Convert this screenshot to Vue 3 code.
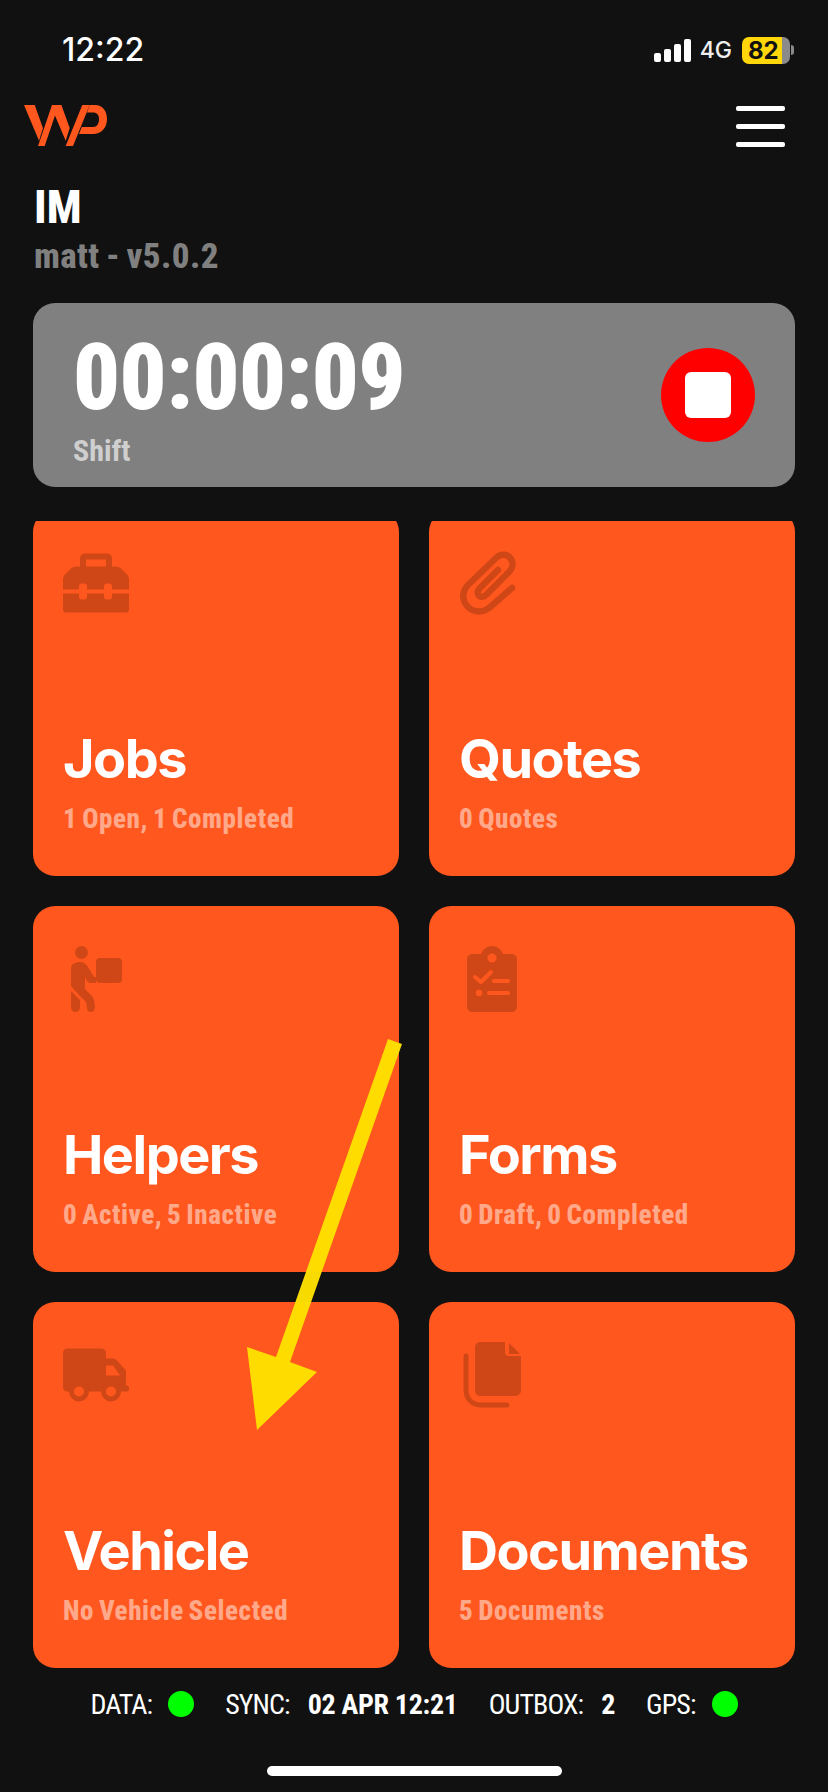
<template>
  <div class="screen">
    <div class="statusbar">
      <span class="clock">12:22</span>
      <div class="status-right">
        <svg class="signal" width="38" height="23" viewBox="0 0 38 23">
          <rect x="0" y="14" width="7" height="9" rx="2" />
          <rect x="10" y="10" width="7" height="13" rx="2" />
          <rect x="20" y="5" width="7" height="18" rx="2" />
          <rect x="30" y="0" width="7" height="23" rx="2" />
        </svg>
        <span class="net">4G</span>
        <div class="battery">
          <div class="battery-body"><span>82</span></div>
          <div class="battery-cap"></div>
        </div>
      </div>
    </div>

    <div class="topbar">
      <svg class="logo" width="85" height="42" viewBox="0 0 85 42">
        <polygon points="1,0 11.7,0 20,23.3 16,35.7" />
        <polygon points="15,41 21.7,41 32,10.4 42.7,35.7 46.7,23 38.4,0 29,0" />
        <polygon points="42.7,41 50,41 66.7,0 59.3,0" />
        <path d="M66.7 0 H72 C79.5 0 84 6 84 14 C84 23 78 29 70 29 H56 L58.8 22 H70 C74 22 76 18.5 76 14 C76 10 74 7.5 70 7.5 H64 Z" />
      </svg>
      <div class="burger"><i></i><i></i><i></i></div>
    </div>

    <div class="who">
      <div class="who-name">IM</div>
      <div class="who-sub">matt - v5.0.2</div>
    </div>

    <div class="shift">
      <div>
        <div class="shift-time">00:00:09</div>
        <div class="shift-label">Shift</div>
      </div>
      <div class="stop"><span></span></div>
    </div>

    <div class="scroller">
      <div class="grid">
        <div v-for="c in cards" :key="c.title" class="card">
          <div class="card-icon">
            <svg v-if="c.icon === 'toolbox'" width="66" height="59" viewBox="0 0 66 59">
              <path class="ic" fill-rule="evenodd" d="M17 13 V5 C17 2 19 0 22 0 H44 C47 0 49 2 49 5 V13 H53 C55 13 57 14 58 15 L64 21 C65 22 66 24 66 26 V36 H0 V26 C0 24 1 22 2 21 L8 15 C9 14 11 13 13 13 Z M23 6 V13 H43 V6 Z M0 40 H66 V56 C66 58 65 59 63 59 H3 C1 59 0 58 0 56 Z" />
              <rect class="cut" x="16" y="30" width="8" height="16" rx="3" />
              <rect class="cut" x="41" y="30" width="8" height="16" rx="3" />
            </svg>
            <svg v-else-if="c.icon === 'clip'" width="64" height="64" viewBox="0 0 64 64">
              <path class="stroke" d="M52 37 L29 57 C21 63 10 61 5 52 C2 46 3 40 7 35 L36 7 C41 2 48 3 51 8 C54 13 52 18 49 21 L26 44 C23 47 19 46 18 43 C17 41 18 39 20 37 L38 19" />
            </svg>
            <svg v-else-if="c.icon === 'carry'" width="51" height="66" viewBox="0 0 51 66">
              <circle class="ic" cx="10.5" cy="6.5" r="6.5" />
              <rect class="ic" x="25" y="12" width="26" height="25" rx="4" />
              <path class="ic" d="M0 23 C0 18 4 16 9 16 C13 16 15 18 17 21 L23 31 H25 V37 H20 C18 37 17 36 16 35 L14 31 V43 L21 50 C22 51 22 52 23 54 L24 61 C24 64 22 66 20 66 C18 66 16 65 16 62 L15 56 L5 46 L0 40 Z" />
              <path class="ic" d="M0 45 L9 54 V61 C9 64 7 66 4.5 66 C2 66 0 64 0 61 Z" />
            </svg>
            <svg v-else-if="c.icon === 'clipboard'" width="50" height="66" viewBox="0 0 50 66">
              <path class="ic" d="M6 8 H14 C16 3 20 0 25 0 C30 0 34 3 36 8 H44 C48 8 50 10 50 14 V60 C50 64 48 66 44 66 H6 C2 66 0 64 0 60 V14 C0 10 2 8 6 8 Z" />
              <circle class="cut" cx="25" cy="12" r="4.5" />
              <path class="cut-line" d="M8 31 L14 36 L24 26" />
              <path class="cut-line" d="M27 35 H41" />
              <circle class="cut" cx="12" cy="47" r="3.2" />
              <path class="cut-line" d="M22 47 H41" />
            </svg>
            <svg v-else-if="c.icon === 'truck'" width="66" height="53" viewBox="0 0 66 53">
              <path class="ic" d="M4 0 H38 C41 0 43 2 43 4 V10 H50 C52 10 53 11 54 12 L62 21 C63 22 63 23 63 25 V37 H64 C65 37 66 38 66 39 V41 C66 42 65 43 64 43 H4 C2 43 0 41 0 39 V4 C0 2 2 0 4 0 Z" />
              <path class="cut" d="M43 17 H50 L57 27 H43 Z" />
              <circle class="ic" cx="16" cy="43" r="10" />
              <circle class="ic" cx="48" cy="43" r="10" />
              <circle class="cut" cx="16" cy="43" r="5" />
              <circle class="cut" cx="48" cy="43" r="5" />
            </svg>
            <svg v-else width="59" height="66" viewBox="0 0 59 66">
              <path class="ic" d="M18 0 H42 V10 C42 12 43 14 46 14 H58 V48 C58 52 55 54 52 54 H18 C14 54 12 52 12 48 V6 C12 2 14 0 18 0 Z" />
              <path class="ic" d="M46 1 L57 12 H46 Z" />
              <path class="stroke thin" d="M3 14 V47 C3 57 9 63 19 63 H44" />
            </svg>
          </div>
          <div class="card-title">{{ c.title }}</div>
          <div class="card-sub">{{ c.sub }}</div>
        </div>
      </div>
    </div>

    <div class="footer">
      <span class="f-label">DATA:</span><span class="dot"></span>
      <span class="f-label f-gap">SYNC:</span><b>02 APR 12:21</b>
      <span class="f-label f-gap">OUTBOX:</span><b>2</b>
      <span class="f-label f-gap">GPS:</span><span class="dot"></span>
    </div>

    <div class="home-wrap"><div class="home"></div></div>

    <!-- annotation drawn on top of the screenshot -->
    <svg class="arrow" width="828" height="1792" viewBox="0 0 828 1792">
      <polygon points="388,1039 402,1044 290,1362 317,1372 257,1430 247,1347 276,1357" />
    </svg>
  </div>
</template>

<script setup>
const cards = [
  { title: 'Jobs', sub: '1 Open, 1 Completed', icon: 'toolbox' },
  { title: 'Quotes', sub: '0 Quotes', icon: 'clip' },
  { title: 'Helpers', sub: '0 Active, 5 Inactive', icon: 'carry' },
  { title: 'Forms', sub: '0 Draft, 0 Completed', icon: 'clipboard' },
  { title: 'Vehicle', sub: 'No Vehicle Selected', icon: 'truck' },
  { title: 'Documents', sub: '5 Documents', icon: 'copy' }
]
</script>

<style>
html, body {
  margin: 0;
  background: #111111;
}
</style>

<style scoped>
.screen {
  position: relative;
  width: 828px;
  height: 1792px;
  overflow: hidden;
  background: #111111;
  color: #fff;
  font-family: Inter, "Liberation Sans", sans-serif;
  display: flex;
  flex-direction: column;
}

.statusbar {
  height: 100px;
  display: flex;
  justify-content: space-between;
  align-items: flex-start;
  padding: 30px 34px 0 62px;
  box-sizing: border-box;
}

.clock {
  font-size: 32px;
  font-weight: 500;
  line-height: 40px;
}

.status-right {
  display: flex;
  align-items: center;
  gap: 8px;
  height: 40px;
}

.signal {
  fill: #fff;
}

.net {
  font-size: 23px;
  font-weight: 500;
  color: #eee;
}

.battery {
  display: flex;
  align-items: center;
  gap: 1px;
  margin-left: 2px;
}

.battery-body {
  width: 48px;
  height: 27px;
  border-radius: 7px;
  box-sizing: border-box;
  background: linear-gradient(to right, #ffd60a 83%, #8a8a8a 83%);
  color: #111;
  font-size: 24px;
  font-weight: 700;
  line-height: 27px;
  padding-left: 6px;
}

.battery-cap {
  width: 3px;
  height: 10px;
  border-radius: 0 3px 3px 0;
  background: #8a8a8a;
}

.topbar {
  height: 52px;
  display: flex;
  justify-content: space-between;
  align-items: center;
  padding: 0 43px 0 23px;
}

.logo {
  fill: #ff571e;
}

.burger {
  width: 49px;
  display: flex;
  flex-direction: column;
  gap: 13px;
}

.burger i {
  display: block;
  height: 5px;
  border-radius: 2px;
  background: #fff;
}

.who {
  padding: 30px 34px 0;
  height: 151px;
  box-sizing: border-box;
}

.who-name {
  font-family: Roboto, "Liberation Sans", sans-serif;
  font-stretch: 75%;
  font-size: 46px;
  font-weight: 800;
  line-height: 50px;
}

.who-sub {
  font-family: Roboto, "Liberation Sans", sans-serif;
  font-stretch: 75%;
  font-size: 35px;
  font-weight: 800;
  line-height: 40px;
  margin-top: 5px;
  word-spacing: -2px;
  letter-spacing: 0.4px;
  color: #808080;
}

.shift {
  height: 184px;
  margin: 0 33px;
  padding: 0 40px;
  border-radius: 22px;
  background: #808080;
  display: flex;
  justify-content: space-between;
  align-items: center;
}

.shift-time {
  font-family: Roboto, "Liberation Sans", sans-serif;
  font-stretch: 75%;
  font-size: 92px;
  font-weight: 900;
  line-height: 96px;
  letter-spacing: -0.5px;
  margin-top: 8px;
}

.shift-label {
  font-family: Roboto, "Liberation Sans", sans-serif;
  font-stretch: 75%;
  font-size: 30px;
  font-weight: 700;
  line-height: 36px;
  margin-top: 7px;
  color: #cfcfcf;
}

.stop {
  width: 94px;
  height: 94px;
  border-radius: 50%;
  background: #ff0000;
  display: flex;
  align-items: center;
  justify-content: center;
}

.stop span {
  width: 46px;
  height: 46px;
  border-radius: 6px;
  background: #fff;
}

.scroller {
  margin-top: 34px;
  height: 1147px;
  overflow: hidden;
}

.grid {
  margin: -11px 33px 0;
  display: grid;
  grid-template-columns: 366px 366px;
  gap: 30px;
}

.card {
  height: 366px;
  border-radius: 22px;
  background: #ff571e;
  padding: 0 30px;
  box-sizing: border-box;
  display: flex;
  flex-direction: column;
}

.card-icon {
  width: 66px;
  height: 217px;
  padding-top: 40px;
  box-sizing: border-box;
}

.card-icon svg {
  display: block;
  margin: 0 auto;
  height: 66px;
}

.ic {
  fill: #cf4716;
}

.cut {
  fill: #ff571e;
}

.cut-line {
  fill: none;
  stroke: #ff571e;
  stroke-width: 4;
  stroke-linecap: round;
  stroke-linejoin: round;
}

.stroke {
  fill: none;
  stroke: #cf4716;
  stroke-width: 6.5;
  stroke-linecap: round;
  stroke-linejoin: round;
}

.stroke.thin {
  stroke-width: 5;
}

.card-title {
  font-size: 54px;
  font-weight: 700;
  line-height: 64px;
  letter-spacing: -1.5px;
}

.card-sub {
  font-family: Roboto, "Liberation Sans", sans-serif;
  font-stretch: 75%;
  font-size: 27px;
  font-weight: 800;
  line-height: 36px;
  margin-top: 10px;
  word-spacing: -2px;
  letter-spacing: 0.6px;
  color: #ffa98a;
}

.footer {
  margin-top: 16px;
  height: 40px;
  display: flex;
  justify-content: center;
  align-items: center;
  font-family: Roboto, "Liberation Sans", sans-serif;
  font-stretch: 75%;
  font-size: 28px;
}

.f-label {
  letter-spacing: -0.9px;
}

.footer b {
  margin-left: 18px;
  letter-spacing: -0.3px;
}

.f-gap {
  margin-left: 31px;
}

.dot {
  width: 26px;
  height: 26px;
  margin-left: 16px;
  border-radius: 50%;
  background: #00ff00;
}

.home-wrap {
  margin-top: 42px;
  display: flex;
  justify-content: center;
}

.home {
  width: 295px;
  height: 10px;
  border-radius: 5px;
  background: #fff;
}

.arrow {
  position: absolute;
  left: 0;
  top: 0;
  fill: #ffe100;
  opacity: 0.97;
  pointer-events: none;
}
</style>
